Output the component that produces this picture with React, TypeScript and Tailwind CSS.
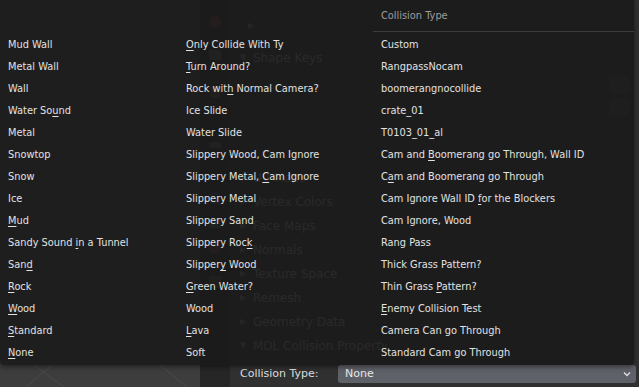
import React from "react";

const col1 = [
  "Mud Wall",
  "Metal Wall",
  "Wall",
  "Water So&und",
  "Metal",
  "Snowtop",
  "Snow",
  "Ice",
  "&Mud",
  "Sandy Sound &in a Tunnel",
  "San&d",
  "&Rock",
  "&Wood",
  "&Standard",
  "&None",
];
const col2 = [
  "&Only Collide With Ty",
  "&Turn Around?",
  "Rock wit&h Normal Camera?",
  "Ice Slide",
  "Water Slide",
  "Slippery Wood, Cam Ignore",
  "Slippery Metal, &Cam Ignore",
  "Slippery Metal",
  "Slippery Sand",
  "Slippery Roc&k",
  "Slipper&y Wood",
  "&Green Water?",
  "Wood",
  "&Lava",
  "Soft",
];
const col3 = [
  "Custom",
  "RangpassNocam",
  "boomerangnocollide",
  "crate_01",
  "T0103_01_al",
  "Cam and &Boomerang go Through, Wall ID",
  "C&am and Boomerang go Through",
  "Cam Ignore Wall ID &for the Blockers",
  "Cam Ignore, Wood",
  "Rang Pass",
  "Thick Grass Pattern?",
  "Thin Grass &Pattern?",
  "&Enemy Collision Test",
  "Camera Can go Through",
  "Standard Cam go Through",
];

function Label({ text }: { text: string }) {
  const i = text.indexOf("&");
  if (i < 0) return <span>{text}</span>;
  return (
    <span className="whitespace-pre">
      {text.slice(0, i)}
      <span className="underline decoration-[1px] underline-offset-[2px]">{text.charAt(i + 1)}</span>
      {text.slice(i + 2)}
    </span>
  );
}

function Column({ items, width }: { items: string[]; width: string }) {
  return (
    <div className={`flex flex-col ${width}`}>
      {items.map((t) => (
        <div key={t} className="h-[22px] flex items-center pl-[8px] whitespace-nowrap text-[#e2e2e2]">
          <Label text={t} />
        </div>
      ))}
    </div>
  );
}

function Heading({ label, open }: { label: string; open?: boolean }) {
  return (
    <div className="h-[24px] flex items-center pl-[10px] gap-[5px] text-[#a8a8a8] text-[12px]">
      <span className="w-[8px] text-[8px] text-[#888888]">{open ? "▼" : "▶"}</span>
      <span>{label}</span>
    </div>
  );
}

export default function App() {
  return (
    <div className="relative w-[639px] h-[387px] overflow-hidden bg-[#303030] font-['DejaVu_Sans',sans-serif] text-[9.8px]">
      {/* background blender UI */}
      <div className="flex h-full">
        {/* viewport */}
        <div className="w-[200px] h-full bg-[#3d3d3d] relative">
          <svg className="absolute inset-0" width="200" height="387">
            <line x1="26" y1="387" x2="52" y2="365" stroke="#4b4b4b" strokeWidth="1" />
            <line x1="34" y1="365" x2="64" y2="387" stroke="#4b4b4b" strokeWidth="1" />
            <line x1="160" y1="365" x2="187" y2="387" stroke="#4b4b4b" strokeWidth="1" />
          </svg>
        </div>
        {/* tab strip */}
        <div className="w-[30px] h-full bg-[#262626] flex flex-col items-center pt-[16px]">
          <div className="w-[12px] h-[12px] rounded-full bg-[#703535]" />
          <div className="w-[12px] h-[10px] rounded-[2px] bg-[#5a5a5a] mt-[22px]" />
          <div className="w-[10px] h-[12px] rounded-[2px] bg-[#704a30] mt-[26px]" />
          <div className="w-[12px] h-[6px] rounded-[2px] bg-[#3a5070] mt-[10px]" />
          <div className="w-[12px] h-[6px] rounded-[2px] bg-[#5a5a5a] mt-[28px]" />
          <div className="w-[12px] h-[12px] rounded-full border-[2px] border-[#3a5070] mt-[44px]" />
          <div className="w-[12px] h-[10px] bg-[#356045] mt-[14px]" />
          <div className="w-[12px] h-[12px] rounded-full bg-[#703535] mt-[14px]" />
          <div className="w-[12px] h-[12px] bg-[#604040] mt-[22px]" />
        </div>
        {/* properties */}
        <div className="flex-1 h-full flex flex-col pt-[14px] relative">
          <div className="h-[24px] flex items-center pl-[18px] text-[8px] text-[#888888]">▶</div>
          <div className="h-[8px]" />
          <Heading label="Shape Keys" open />
          <div className="h-[96px] flex flex-col items-end pr-[10px] pt-[6px] gap-[4px]">
            <div className="w-[20px] h-[18px] rounded-[3px] bg-[#3c3c3c]" />
            <div className="w-[20px] h-[18px] rounded-[3px] bg-[#3c3c3c]" />
          </div>
          <Heading label="UV Maps" />
          <Heading label="Vertex Colors" />
          <Heading label="Face Maps" />
          <Heading label="Normals" />
          <Heading label="Texture Space" />
          <Heading label="Remesh" />
          <Heading label="Geometry Data" />
          <Heading label="MDL Collision Property" open />
          <div className="mt-[7px] h-[18px] flex items-center">
            <div className="w-[108px] pl-[10px] text-[#dcdcdc] text-[11px] whitespace-nowrap">Collision Type:</div>
            <div className="w-[298px] h-[18px] rounded-[3px] bg-[#5e6168] flex items-center justify-between pl-[7px] pr-[4px] text-[#e8e8e8] text-[11px]">
              <span>None</span>
              <svg width="10" height="10" viewBox="0 0 10 10">
                <path d="M2 3.5 L5 6.5 L8 3.5" fill="none" stroke="#e0e0e0" strokeWidth="1.3" />
              </svg>
            </div>
          </div>
        </div>
      </div>

      {/* dropdown menu overlay */}
      <div className="absolute left-0 top-[-3px] w-[634px] h-[368px] rounded-[4px] bg-[#1b1b1b]/[0.9] shadow-[0_2px_5px_rgba(0,0,0,0.45)] flex flex-col">
        <div className="h-[37px] flex flex-col">
          <div className="h-[34px] flex items-center pl-[381px] pt-[4px] text-[#9c9c9c]">Collision Type</div>
          <div className="ml-[373px] h-px bg-[#3c3c3c]" />
        </div>
        <div className="flex">
          <Column items={col1} width="w-[178px]" />
          <Column items={col2} width="w-[195px]" />
          <Column items={col3} width="flex-1" />
        </div>
      </div>
    </div>
  );
}
